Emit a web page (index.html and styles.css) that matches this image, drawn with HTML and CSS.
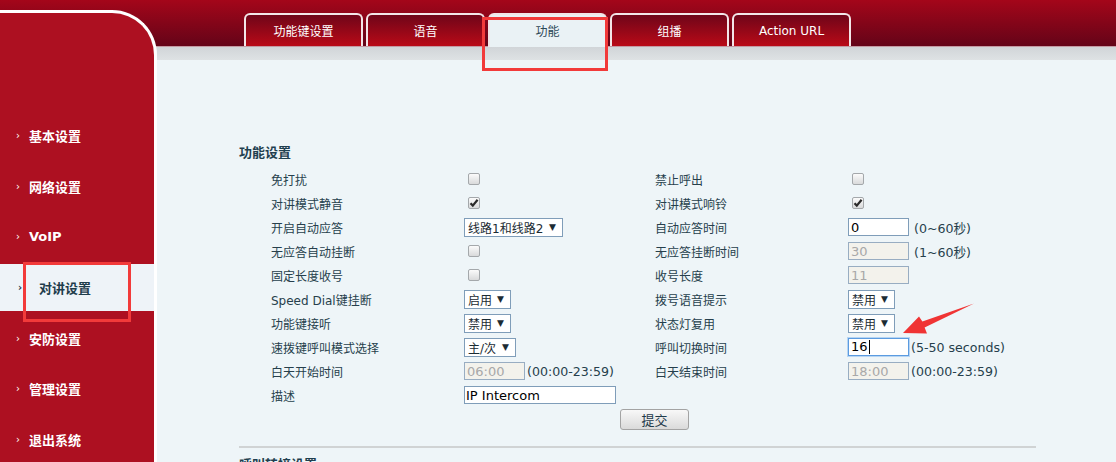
FILE: index.html
```html
<!DOCTYPE html>
<html>
<head>
    <meta charset="utf-8" />
    <title>对讲设置 - 功能</title>
    <meta name="viewport" content="width=device-width, initial-scale=1">
    <link rel="stylesheet" href="styles.css">
</head>
<body>
    <div class="page">
        <aside class="side">
            <ul class="nav">
                <li><span class="chev">›</span>基本设置</li>
                <li><span class="chev">›</span>网络设置</li>
                <li><span class="chev">›</span>VoIP</li>
                <li class="on"><span class="chev">›</span>对讲设置</li>
                <li><span class="chev">›</span>安防设置</li>
                <li><span class="chev">›</span>管理设置</li>
                <li><span class="chev">›</span>退出系统</li>
            </ul>
        </aside>
        <div class="main">
            <div class="tabs">
                <div class="tab">功能键设置</div>
                <div class="tab">语音</div>
                <div class="tab on">功能</div>
                <div class="tab">组播</div>
                <div class="tab">Action URL</div>
            </div>
            <div class="content">
                <h3 class="title">功能设置</h3>
                <div class="form">
                    <label>免打扰</label>
                    <div class="ctl"><span class="cb"></span></div>
                    <label>禁止呼出</label>
                    <div class="ctl"><span class="cb"></span></div>

                    <label>对讲模式静音</label>
                    <div class="ctl"><span class="cb"><svg viewBox="0 0 10 10"><path d="M1.5 5.2 L3.8 7.6 L8.6 1.8" /></svg></span></div>
                    <label>对讲模式响铃</label>
                    <div class="ctl"><span class="cb"><svg viewBox="0 0 10 10"><path d="M1.5 5.2 L3.8 7.6 L8.6 1.8" /></svg></span></div>

                    <label>开启自动应答</label>
                    <div class="ctl"><span class="sel w-line">线路1和线路2<i>▼</i></span></div>
                    <label>自动应答时间</label>
                    <div class="ctl"><input class="inp" type="text" value="0"><span class="hint sp">(0~60秒)</span></div>

                    <label>无应答自动挂断</label>
                    <div class="ctl"><span class="cb"></span></div>
                    <label>无应答挂断时间</label>
                    <div class="ctl"><input class="inp" type="text" value="30" disabled><span class="hint sp">(1~60秒)</span></div>

                    <label>固定长度收号</label>
                    <div class="ctl"><span class="cb"></span></div>
                    <label>收号长度</label>
                    <div class="ctl"><input class="inp" type="text" value="11" disabled></div>

                    <label>Speed Dial键挂断</label>
                    <div class="ctl"><span class="sel w-s">启用<i>▼</i></span></div>
                    <label>拨号语音提示</label>
                    <div class="ctl"><span class="sel w-s">禁用<i>▼</i></span></div>

                    <label>功能键接听</label>
                    <div class="ctl"><span class="sel w-s">禁用<i>▼</i></span></div>
                    <label>状态灯复用</label>
                    <div class="ctl"><span class="sel w-s">禁用<i>▼</i></span></div>

                    <label>速拨键呼叫模式选择</label>
                    <div class="ctl"><span class="sel w-m">主/次<i>▼</i></span></div>
                    <label>呼叫切换时间</label>
                    <div class="ctl"><span class="inp focus">16<b class="caret"></b></span><span class="hint">(5-50 seconds)</span></div>

                    <label>白天开始时间</label>
                    <div class="ctl"><input class="inp" type="text" value="06:00" disabled><span class="hint">(00:00-23:59)</span></div>
                    <label>白天结束时间</label>
                    <div class="ctl"><input class="inp" type="text" value="18:00" disabled><span class="hint">(00:00-23:59)</span></div>

                    <label>描述</label>
                    <div class="ctl"><input class="inp wide" type="text" value="IP Intercom"></div>
                </div>
                <div class="actions"><button class="btn">提交</button></div>
                <hr class="sep">
                <h3 class="title">呼叫转接设置</h3>
            </div>
        </div>
    </div>

    <!-- annotations drawn over the screenshot -->
    <div class="mark mark-tab"></div>
    <div class="mark mark-nav"></div>
    <svg class="arrow" viewBox="900 300 76 36">
        <polygon points="903,333 919,316.5 922.4,321.6 974,303.5 924.6,327.6 927,333.5" />
    </svg>
</body>
</html>
```

FILE: styles.css
```css
body {
    margin: 0;
    width: 1116px;
    height: 462px;
    overflow: hidden;
    position: relative;
    font-family: "DejaVu Sans", "Noto Sans CJK SC", sans-serif;
    background:
        linear-gradient(#a4061a, #640418) 0 0 / 100% 46px no-repeat,
        linear-gradient(#c49aa3, #c49aa3) 0 46px / 100% 1px no-repeat,
        linear-gradient(#d1d5d8, #dee2e4) 0 47px / 100% 13px no-repeat,
        #eef5f8;
}
.page {
    display: flex;
    height: 462px;
}

/* left menu */
.side {
    width: 154px;
    flex: none;
    margin-top: 10px;
    padding-top: 99px;
    background: #ad1021;
    border-top: 3px solid #fff;
    border-right: 3px solid #fff;
    border-top-right-radius: 45px;
}
.nav {
    list-style: none;
    margin: 0;
    padding: 0;
}
.nav li {
    height: 47px;
    margin-bottom: 3.7px;
    display: flex;
    align-items: center;
    padding-left: 16px;
    color: #fff;
    font-size: 13px;
    font-weight: bold;
}
.chev {
    width: 13px;
    font-size: 10px;
    font-weight: normal;
}
.nav li.on {
    background: #eef3f8;
    color: #1f3d4c;
    padding-left: 18px;
}
.nav li.on .chev {
    width: 21px;
    font-weight: bold;
}

/* tabs */
.main {
    flex: 1;
    display: flex;
    flex-direction: column;
}
.tabs {
    height: 46px;
    box-sizing: border-box;
    padding: 13px 0 0 87px;
    display: flex;
    gap: 3px;
}
.tab {
    width: 119px;
    height: 33px;
    box-sizing: border-box;
    border: 2px solid #f3e6e8;
    border-bottom: 0;
    border-radius: 6px 6px 0 0;
    background: linear-gradient(#6f0519, #b90a17);
    color: #fff;
    font-size: 12px;
    display: flex;
    align-items: center;
    justify-content: center;
}
.tab.on {
    height: 34px;
    padding-bottom: 1px;
    background: #eaf2f5;
    color: #2c4855;
}

/* content */
.content {
    padding: 97px 0 0 82px;
}
.title {
    margin: 0;
    font-size: 13px;
    font-weight: bold;
    line-height: 20px;
    color: #1f3f4f;
}
.form {
    margin: 4px 0 0 32px;
    display: grid;
    grid-template-columns: 193px 191px 193px 1fr;
    grid-auto-rows: 24px;
    align-items: center;
    font-size: 12px;
    color: #263f4c;
}
.ctl {
    display: flex;
    align-items: center;
}
.cb {
    width: 10px;
    height: 10px;
    margin-left: 4px;
    border: 1px solid #a4a8ab;
    border-radius: 2px;
    background: linear-gradient(#fbfbfb, #d9dadb);
    display: flex;
}
.cb svg {
    width: 10px;
    height: 10px;
    fill: none;
    stroke: #2a2a2a;
    stroke-width: 2.2;
}
.sel {
    height: 19px;
    box-sizing: border-box;
    border: 1px solid #7f9db9;
    background: #fff;
    padding: 0 6px 0 3px;
    display: inline-flex;
    align-items: center;
    justify-content: space-between;
    font-size: 12px;
    color: #1b2b33;
}
.sel i {
    font-style: normal;
    font-size: 9px;
}
.w-line { width: 99px; }
.w-s { width: 47px; }
.w-m { width: 52px; }
.inp {
    width: 61px;
    height: 18px;
    box-sizing: border-box;
    margin: 0;
    padding: 0 2px;
    border: 1px solid #7f9db9;
    background: #fff;
    font-family: "DejaVu Sans", "Noto Sans CJK SC", sans-serif;
    font-size: 13px;
    color: #000;
    outline: none;
}
.inp:disabled {
    background: #f3f2ec;
    border-color: #98adc2;
    color: #a8a8a8;
}
.inp.wide {
    width: 152px;
    padding-left: 1px;
}
.inp.focus {
    display: inline-flex;
    align-items: center;
    border-color: #5b9be0;
    box-shadow: 0 0 0 1px #b7d5f3;
    line-height: 16px;
}
.caret {
    width: 1px;
    height: 14px;
    margin-left: 1px;
    background: #000;
}
.hint {
    margin-left: 2px;
    font-size: 12.6px;
    color: #263f4c;
}
.hint.sp {
    margin-left: 5px;
}
.actions {
    margin-top: 2px;
    padding-left: 381px;
}
.btn {
    width: 69px;
    height: 21px;
    padding: 0;
    border: 1px solid #a3a3a3;
    border-radius: 3px;
    background: linear-gradient(#f8f8f8, #dadada);
    font-family: "DejaVu Sans", "Noto Sans CJK SC", sans-serif;
    font-size: 13px;
    color: #1e3a4a;
}
.sep {
    width: 797px;
    height: 2px;
    margin: 16px 0 7px;
    border: 0;
    background: #d0d3d4;
}

/* red annotations */
.mark {
    position: absolute;
    box-sizing: border-box;
    border: 3px solid #f23a3a;
}
.mark-tab {
    left: 482px;
    top: 17px;
    width: 126px;
    height: 54px;
}
.mark-nav {
    left: 23px;
    top: 262px;
    width: 108px;
    height: 60px;
}
.arrow {
    position: absolute;
    left: 900px;
    top: 300px;
    width: 76px;
    height: 36px;
    fill: #f03434;
}
```
